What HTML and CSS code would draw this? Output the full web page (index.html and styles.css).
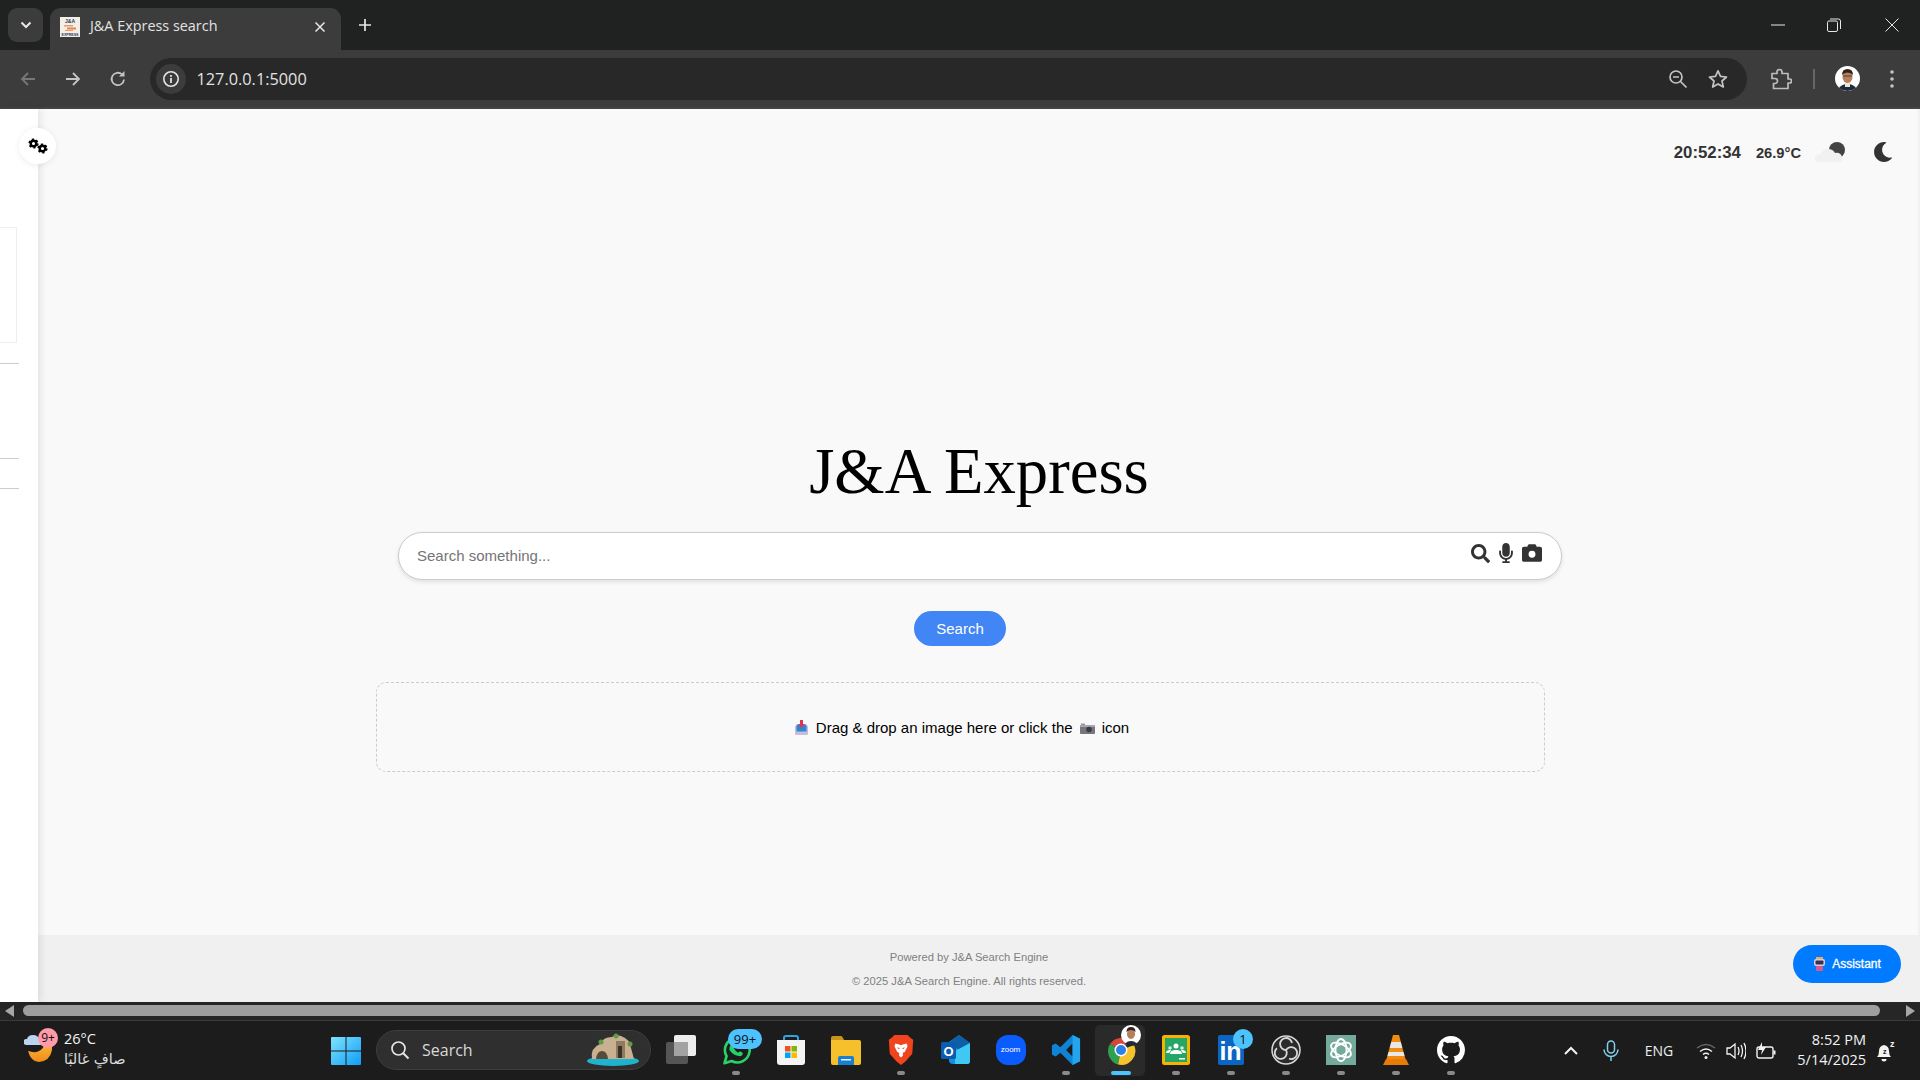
FILE: index.html
```html
<!DOCTYPE html>
<html lang="en">
<head>
    <meta charset="UTF-8">
    <title>J&amp;A Express search</title>
    <link rel="stylesheet" href="styles.css">
</head>
<body>
    <!-- browser chrome -->
    <div class="tabstrip">
        <div class="tab-search">
            <svg width="12" height="8" viewBox="0 0 12 8"><path d="M1.5 1.5 6 6l4.500-4.500" fill="none" stroke="#e8e8e8" stroke-width="2"/></svg>
        </div>
        <div class="tab">
            <svg class="favicon" width="20" height="20" viewBox="0 0 20 20">
                <rect width="20" height="20" fill="#f3eee6"/>
                <text x="10" y="6" font-size="5" font-weight="bold" text-anchor="middle" fill="#1f3a5f" font-family="Liberation Sans">J&amp;A</text>
                <rect x="4" y="8" width="9" height="1.5" fill="#e89a6a"/>
                <rect x="7" y="10.5" width="9" height="2" fill="#e8854f"/>
                <rect x="5" y="13" width="8" height="1" fill="#e89a6a"/>
                <text x="10" y="19" font-size="3.6" font-weight="bold" text-anchor="middle" fill="#1f3a5f" font-family="Liberation Sans">EXPRESS</text>
            </svg>
            <span class="tab-title">J&amp;A Express search</span>
            <svg class="tab-close" width="10" height="10" viewBox="0 0 10 10"><path d="M.5.5l9 9m0-9l-9 9" stroke="#e8e8e8" stroke-width="1.5"/></svg>
        </div>
        <svg class="new-tab" width="14" height="14" viewBox="0 0 14 14"><path d="M7 1v12M1 7h12" stroke="#e8e8e8" stroke-width="1.7"/></svg>
        <div class="win-controls">
            <svg width="14" height="14" viewBox="0 0 14 14" class="win-min"><path d="M0 7h14" stroke="#e8e8e8" stroke-width="1"/></svg>
            <svg width="14" height="14" viewBox="0 0 14 14" class="win-restore"><rect x=".5" y="3" width="10" height="10.5" rx="1.5" fill="none" stroke="#e8e8e8"/><path d="M3 1h8.500q2 0 2 2v8" fill="none" stroke="#e8e8e8"/></svg>
            <svg width="14" height="14" viewBox="0 0 14 14" class="win-close"><path d="M.5.5l13 13m0-13l-13 13" stroke="#e8e8e8" stroke-width="1"/></svg>
        </div>
    </div>

    <div class="toolbar">
        <div class="nav-btn">
            <svg width="18" height="18" viewBox="0 0 18 18"><path d="M16 9H3M9 3 3 9l6 6" fill="none" stroke="#777" stroke-width="1.8"/></svg>
        </div>
        <div class="nav-btn">
            <svg width="18" height="18" viewBox="0 0 18 18"><path d="M2 9h13M9 3l6 6-6 6" fill="none" stroke="#c4c4c4" stroke-width="1.8"/></svg>
        </div>
        <div class="nav-btn">
            <svg width="18" height="18" viewBox="-1 0 18 18"><path d="M15 9.500A6.200 6.200 0 1 1 13 4.400" fill="none" stroke="#c4c4c4" stroke-width="1.8"/><path d="M15.500 1v5.500H10z" fill="#c4c4c4"/></svg>
        </div>
        <div class="address">
            <div class="site-info">
                <svg width="18" height="18" viewBox="0 0 18 18"><circle cx="9" cy="9" r="7.200" fill="none" stroke="#e4e4e4" stroke-width="1.600"/><rect x="8.100" y="8" width="1.800" height="5" fill="#e4e4e4"/><rect x="8.100" y="5" width="1.800" height="1.800" fill="#e4e4e4"/></svg>
            </div>
            <span class="url">127.0.0.1:5000</span>
            <svg class="addr-zoom" width="20" height="20" viewBox="0 0 20 20"><circle cx="8" cy="8" r="6" fill="none" stroke="#c4c4c4" stroke-width="1.700"/><path d="M5 8h6M12.500 12.500 18.500 18.500" stroke="#c4c4c4" stroke-width="1.700"/></svg>
            <svg class="addr-star" width="20" height="20" viewBox="0 0 20 20"><path d="M10 1.800l2.500 5.600 6 .6-4.500 4 1.300 6-5.300-3.100-5.300 3.100 1.300-6-4.500-4 6-.6z" fill="none" stroke="#c4c4c4" stroke-width="1.700" stroke-linejoin="round"/></svg>
        </div>
        <div class="toolbar-end">
            <svg class="puzzle" width="22" height="22" viewBox="0 0 22 22"><path d="M2 5.500h5V4a2.500 2.500 0 0 1 5 0v1.500h6v5.500h1.500a2 2 0 0 1 0 4H18v5.500H3.500v-5h1.500a2.500 2.500 0 0 0 0-5H2z" fill="none" stroke="#bdbdbd" stroke-width="1.700" stroke-linejoin="round"/></svg>
            <span class="toolbar-sep"></span>
            <svg class="avatar" width="25" height="25" viewBox="0 0 25 25">
                <circle cx="12.500" cy="12.500" r="12.500" fill="#fff"/>
                <path d="M4 22q3-4 8.500-4T21 22q-4 3-8.500 3T4 22z" fill="#1f2a3c"/>
                <rect x="10" y="15" width="5" height="6" fill="#f0e4d4"/>
                <ellipse cx="12.500" cy="11" rx="5" ry="6" fill="#b77f5c"/>
                <path d="M7 9q0-6 5.500-6T18 9q-2-2.500-5.500-2.500T7 9z" fill="#33221a"/>
                <path d="M8 10h9" stroke="#444" stroke-width="1"/>
            </svg>
            <svg class="menu-dots" width="4" height="18" viewBox="0 0 4 18"><circle cx="2" cy="2" r="1.800" fill="#c4c4c4"/><circle cx="2" cy="9" r="1.800" fill="#c4c4c4"/><circle cx="2" cy="16" r="1.800" fill="#c4c4c4"/></svg>
        </div>
    </div>

    <!-- the page itself -->
    <div class="page">
        <aside class="sidebar">
            <div class="side-card"></div>
            <div class="side-line first"></div>
            <div class="side-line second"></div>
            <div class="side-line third"></div>
            <button class="gear-btn">
                <svg width="20" height="16" viewBox="0 0 20 16">
                    <circle cx="5.500" cy="5.500" r="2.800" fill="none" stroke="#000" stroke-width="2.400"/>
                    <circle cx="5.500" cy="5.500" r="4.200" fill="none" stroke="#000" stroke-width="1.800" stroke-dasharray="2.200 2.200"/>
                    <circle cx="14.500" cy="10.500" r="2.800" fill="none" stroke="#000" stroke-width="2.400"/>
                    <circle cx="14.500" cy="10.500" r="4.200" fill="none" stroke="#000" stroke-width="1.800" stroke-dasharray="2.200 2.200"/>
                </svg>
            </button>
        </aside>

        <main class="main">
            <div class="status">
                <span class="clock">20:52:34</span>
                <span class="temp">26.9°C</span>
                <svg class="weather" width="30" height="20" viewBox="0 0 30 20">
                    <circle cx="22" cy="8" r="8" fill="#444"/>
                    <path d="M3 20a3.500 3.500 0 0 1 0-7q1-1 3-1 2-5 7-5 5 0 7 4 6-1 7 4.500a2.800 2.800 0 0 1-1 4.500z" fill="#f1f1f1"/>
                </svg>
                <svg class="theme-moon" width="20" height="20" viewBox="0 0 512 512"><path fill="#333" d="M283.211 512c78.962 0 151.079-35.925 198.857-94.792 7.068-8.708-.639-21.43-11.562-19.35-124.203 23.654-238.262-71.576-238.262-196.954 0-72.222 38.662-138.635 101.498-174.394 9.686-5.512 7.25-20.197-3.756-22.23A258.156 258.156 0 0 0 283.211 0c-141.309 0-256 114.511-256 256 0 141.309 114.511 256 256 256z"/></svg>
            </div>

            <h1 class="brand">J&amp;A Express</h1>

            <div class="search-box">
                <span class="placeholder">Search something...</span>
                <svg class="icon-search" width="19" height="19" viewBox="0 0 512 512"><path fill="#333" d="M505 442.700L405.300 343c-4.500-4.500-10.600-7-17-7H372c27.600-35.300 44-79.700 44-128C416 93.100 322.900 0 208 0S0 93.100 0 208s93.100 208 208 208c48.300 0 92.700-16.400 128-44v16.300c0 6.400 2.500 12.500 7 17l99.700 99.700c9.400 9.400 24.600 9.400 33.900 0l28.300-28.300c9.400-9.400 9.400-24.600.1-34zM208 336c-70.700 0-128-57.200-128-128 0-70.700 57.200-128 128-128 70.700 0 128 57.200 128 128 0 70.700-57.200 128-128 128z"/></svg>
                <svg class="icon-mic" width="14" height="20" viewBox="0 0 352 512"><path fill="#333" d="M176 352c53.020 0 96-42.980 96-96V96c0-53.020-42.980-96-96-96S80 42.980 80 96v160c0 53.020 42.980 96 96 96zm160-160h-16c-8.840 0-16 7.160-16 16v48c0 74.800-64.490 134.820-140.790 127.380C96.710 376.890 48 317.110 48 250.300V208c0-8.840-7.160-16-16-16H16c-8.840 0-16 7.160-16 16v40.160c0 89.640 63.970 169.550 152 181.690V464H96c-8.840 0-16 7.160-16 16v16c0 8.840 7.160 16 16 16h160c8.840 0 16-7.160 16-16v-16c0-8.840-7.160-16-16-16h-56v-33.770C285.710 418.470 352 344.900 352 256v-48c0-8.840-7.160-16-16-16z"/></svg>
                <svg class="icon-camera" width="20" height="20" viewBox="0 0 512 512"><path fill="#333" d="M512 144v288c0 26.500-21.500 48-48 48H48c-26.500 0-48-21.500-48-48V144c0-26.500 21.500-48 48-48h88l12.300-32.900c7-18.700 24.900-31.100 44.900-31.100h125.500c20 0 37.900 12.400 44.900 31.100L376 96h88c26.500 0 48 21.500 48 48z"/><circle cx="256" cy="288" r="88" fill="#fff"/></svg>
            </div>

            <div class="lower">
                <button class="search-btn">Search</button>
                <div class="dropzone">
                    <svg class="emoji-inbox" width="13" height="15" viewBox="0 0 13 15">
                        <path d="M0 6h13v8a1 1 0 0 1-1 1H1a1 1 0 0 1-1-1z" fill="#c9bcd8"/>
                        <rect x="1.500" y="4.500" width="10" height="7" fill="#2f86d6"/>
                        <path d="M5 0h3v4h2L6.500 8 3 4h2z" fill="#e0364c"/>
                    </svg>
                    <span>Drag &amp; drop an image here or click the</span>
                    <svg class="emoji-camera" width="15" height="11" viewBox="0 0 15 11">
                        <rect y="2" width="15" height="9" rx="1" fill="#77757d"/>
                        <rect x="1" y="0.500" width="4" height="2" fill="#99979f"/>
                        <rect y="2" width="15" height="2" fill="#a8a6ae"/>
                        <circle cx="9" cy="6.500" r="2.800" fill="#3c3b42"/>
                    </svg>
                    <span>icon</span>
                </div>
            </div>

            <footer class="site-footer">
                <p>Powered by J&amp;A Search Engine</p>
                <p>© 2025 J&amp;A Search Engine. All rights reserved.</p>
            </footer>
        </main>

        <button class="assistant-btn">
            <svg width="13" height="14" viewBox="0 0 13 14">
                <rect x="3" y="0" width="7" height="2.500" fill="#e8b04a"/>
                <rect x="1" y="2" width="11" height="7" rx="2" fill="#d8c8e8"/>
                <rect x="2.500" y="3.500" width="8" height="4" rx="1" fill="#3a3350"/>
                <rect x="3" y="9" width="7" height="5" rx="1" fill="#d85a8a"/>
            </svg>
            Assistant
        </button>
    </div>

    <div class="scrollbar">
        <span class="arrow-left"></span>
        <span class="thumb"></span>
        <span class="arrow-right"></span>
    </div>

    <!-- windows taskbar -->
    <div class="taskbar">
        <div class="tb-weather">
            <div class="tb-weather-icon">
                <svg width="31" height="33" viewBox="0 0 31 33">
                    <defs><linearGradient id="moonFill" x1="0" y1="0" x2="0" y2="1"><stop offset="0" stop-color="#ffc93c"/><stop offset="1" stop-color="#f08a1c"/></linearGradient></defs>
                    <path d="M4 21q9 3 14-2 5-5 4-13 7 4 6 14-2 11-13 12Q7 32 4 21z" fill="url(#moonFill)"/>
                    <path d="M2 15a3 3 0 0 1 1-6q1-4 6-4t6 4h1a3 3 0 0 1 0 6z" fill="#bcd3f2"/>
                </svg>
                <span class="badge-pink">9+</span>
            </div>
            <div class="tb-weather-text">
                <div>26°C</div>
                <div class="tb-arabic" lang="ar" dir="rtl">صافٍ غالبًا</div>
            </div>
        </div>

        <div class="tb-start">
            <svg width="30" height="30" viewBox="0 0 30 30">
                <defs><linearGradient id="winFill" x1="0" y1="0" x2="1" y2="1"><stop offset="0" stop-color="#7fe3fb"/><stop offset="1" stop-color="#0f9dfa"/></linearGradient></defs>
                <path d="M1 1h13.500v13.500H0V2a1 1 0 0 1 1-1zM15.500 1H29a1 1 0 0 1 1 1v12.500H15.500zM0 15.500h14.500V29H1a1 1 0 0 1-1-1zM15.500 15.500H30V28a1 1 0 0 1-1 1H15.500z" fill="url(#winFill)"/>
            </svg>
        </div>

        <div class="tb-search">
            <svg width="20" height="20" viewBox="0 0 20 20"><circle cx="8.500" cy="8.500" r="6.500" fill="none" stroke="#e6e6e6" stroke-width="1.700"/><path d="M13 13l5.500 5.500" stroke="#e6e6e6" stroke-width="1.900"/></svg>
            <span>Search</span>
            <svg class="tb-island" width="54" height="36" viewBox="0 0 54 36">
                <ellipse cx="27" cy="29" rx="26" ry="5" fill="#1eb4cf"/>
                <path d="M6 27q-2-11 8-15 3-7 12-7 3-3 9-1 9 3 10 12l3 11z" fill="#c8b090"/>
                <path d="M30 9h9v17h-9z" fill="#8d7a63"/>
                <rect x="32" y="14" width="4" height="12" fill="#3b3026"/>
                <path d="M10 27q1-8 6-8t6 8z" fill="#5a4a39"/>
                <circle cx="15" cy="10" r="2.500" fill="#5f9a48"/>
                <circle cx="30" cy="4" r="2.500" fill="#5f9a48"/>
                <circle cx="44" cy="12" r="2.500" fill="#5f9a48"/>
            </svg>
        </div>

        <div class="tb-apps">
            <div class="app">
                <svg width="30" height="30" viewBox="0 0 30 30">
                    <rect x="0" y="7" width="22" height="22" rx="2" fill="#555"/>
                    <rect x="8" y="0" width="22" height="21" rx="2" fill="#ededed"/>
                    <rect x="8" y="7" width="14" height="14" fill="#a3a3a3"/>
                </svg>
                <span class="dot hidden"></span>
            </div>
            <div class="app">
                <svg width="30" height="34" viewBox="0 0 30 34" class="app-tall">
                    <path d="M2 32l2.300-8A14 14 0 1 1 10 29.500z" fill="none" stroke="#25d366" stroke-width="3" stroke-linejoin="round"/>
                    <path d="M10 11q2-3 3.500-1l1.500 3-1.500 2q2 3.500 5 5l2-1.500 3 1.500q1 2-2 4-8 0-13-7-1-3 2-6z" fill="#25d366" transform="translate(-1 0)"/>
                </svg>
                <span class="badge-blue wide">99+</span>
                <span class="dot"></span>
            </div>
            <div class="app">
                <svg width="30" height="30" viewBox="0 0 30 30">
                    <path d="M8 6V3q0-2 2-2h10q2 0 2 2v3" fill="none" stroke="#2aa6e0" stroke-width="2"/>
                    <path d="M1 5h28v22q0 3-3 3H4q-3 0-3-3z" fill="#f4f4f4"/>
                    <rect x="9" y="11" width="5.500" height="5.500" fill="#f25022"/>
                    <rect x="15.500" y="11" width="5.500" height="5.500" fill="#7fba00"/>
                    <rect x="9" y="17.500" width="5.500" height="5.500" fill="#00a4ef"/>
                    <rect x="15.500" y="17.500" width="5.500" height="5.500" fill="#ffb900"/>
                </svg>
                <span class="dot hidden"></span>
            </div>
            <div class="app">
                <svg width="30" height="30" viewBox="0 0 30 30">
                    <path d="M0 3q0-2 2-2h8q1 0 2 2l1 2H0z" fill="#c8951c"/>
                    <path d="M0 5h28q2 0 2 2v21q0 2-2 2H2q-2 0-2-2z" fill="#f5c02c"/>
                    <path d="M7 23q0-2 2-2h12q2 0 2 2v7H7z" fill="#1b7fd0"/>
                    <rect x="10" y="24" width="10" height="1.500" fill="#e8f2fb"/>
                </svg>
                <span class="dot hidden"></span>
            </div>
            <div class="app">
                <svg width="26" height="32" viewBox="0 0 26 32">
                    <path d="M6 0h14l3 3 3 2-1 15-7 8-5 4-5-4-7-8L0 5l3-2z" fill="#f0441f"/>
                    <path d="M7 9l4 1 2 1 2-1 4-1 1 3-3 6-2 1v3l-2 2-2-2v-3l-2-1-3-6z" fill="#fff"/>
                    <path d="M9 13l3 1-2 1zM17 13l-3 1 2 1z" fill="#f0441f"/>
                </svg>
                <span class="dot"></span>
            </div>
            <div class="app">
                <svg width="30" height="30" viewBox="0 0 30 30">
                    <path d="M8 7 18 0l11 8v18q0 3-3 3H12q-4 0-4-4z" fill="#1490df"/>
                    <path d="M18 0l11 8-11 7-10-7z" fill="#0f5fa8"/>
                    <path d="M14 16l15-8v18q0 3-3 3H14z" fill="#40c8f5"/>
                    <rect x="0" y="7" width="15" height="17" rx="1.500" fill="#0a5cb0"/>
                    <text x="7.500" y="20.500" font-size="13" font-weight="bold" text-anchor="middle" fill="#fff" font-family="Liberation Sans">O</text>
                </svg>
                <span class="dot hidden"></span>
            </div>
            <div class="app">
                <div class="zoom-logo">zoom</div>
                <span class="dot hidden"></span>
            </div>
            <div class="app">
                <svg width="30" height="32" viewBox="0 0 30 32">
                    <path fill-rule="evenodd" d="M22 0l8 4v24l-8 4L9 19l-5 4-4-2V11l4-2 5 4zM22 9l-7 7 7 7z" fill="#0f84d6"/>
                    <path fill-rule="evenodd" d="M22 0l8 4v24l-8 4zM22 9v14z" fill="#24a4ee"/>
                </svg>
                <span class="dot"></span>
            </div>
            <div class="app active">
                <svg width="30" height="30" viewBox="0 0 30 30">
                    <path d="M15 15 4 9A14 14 0 0 1 28 10H15z" fill="#d9463a"/>
                    <path d="M4 9a14 14 0 0 0 8 20.500L15 15z" fill="#2fa04f"/>
                    <path d="M28 10a14 14 0 0 1-16 19.500L15 15z" fill="#f5c32c"/>
                    <circle cx="15" cy="15" r="6.500" fill="#fff"/>
                    <circle cx="15" cy="15" r="5" fill="#2f7fe8"/>
                </svg>
                <svg class="chrome-profile" width="20" height="22" viewBox="0 0 20 22">
                    <circle cx="10" cy="10" r="10" fill="#fff"/>
                    <path d="M4 19q2-3 6-3t6 3q-3 2-6 2t-6-2z" fill="#222a38"/>
                    <ellipse cx="10" cy="9" rx="4" ry="5" fill="#b77f5c"/>
                    <path d="M5.500 7q0-5 4.500-5t4.500 5q-2-2-4.500-2T5.500 7z" fill="#33221a"/>
                </svg>
                <span class="dot running"></span>
            </div>
            <div class="app">
                <svg width="28" height="30" viewBox="0 0 28 30">
                    <rect x="1.500" y="1.500" width="25" height="27" rx="1" fill="#25a667" stroke="#f4b400" stroke-width="3"/>
                    <circle cx="14" cy="11" r="2.500" fill="#fff"/>
                    <circle cx="8" cy="13" r="1.800" fill="#cfeedd"/>
                    <circle cx="20" cy="13" r="1.800" fill="#cfeedd"/>
                    <path d="M8 19q0-4 6-4t6 4zM4 18q0-3 4-3 1 0 1 .5L7 18zM24 18q0-3-4-3-1 0-1 .5l2 2.500z" fill="#fff"/>
                    <rect x="17" y="23" width="6" height="1.500" fill="#fff"/>
                </svg>
                <span class="dot"></span>
            </div>
            <div class="app">
                <div class="linkedin-logo">in</div>
                <span class="badge-blue">1</span>
                <span class="dot"></span>
            </div>
            <div class="app">
                <svg width="30" height="30" viewBox="0 0 30 30">
                    <circle cx="15" cy="15" r="14" fill="#2b2b2b" stroke="#d8d8d8" stroke-width="1.500"/>
                    <g fill="none" stroke="#d8d8d8" stroke-width="1.800">
                        <path d="M15 15a6 6 0 1 1 6-7"/>
                        <path d="M15 15a6 6 0 1 1 6-7" transform="rotate(120 15 15)"/>
                        <path d="M15 15a6 6 0 1 1 6-7" transform="rotate(240 15 15)"/>
                    </g>
                </svg>
                <span class="dot"></span>
            </div>
            <div class="app">
                <svg width="30" height="30" viewBox="0 0 30 30">
                    <rect width="30" height="30" fill="#74aa9c"/>
                    <g fill="none" stroke="#fff" stroke-width="1.800">
                        <ellipse cx="15" cy="15" rx="5.500" ry="11"/>
                        <ellipse cx="15" cy="15" rx="5.500" ry="11" transform="rotate(60 15 15)"/>
                        <ellipse cx="15" cy="15" rx="5.500" ry="11" transform="rotate(120 15 15)"/>
                    </g>
                </svg>
                <span class="dot"></span>
            </div>
            <div class="app">
                <svg width="26" height="30" viewBox="0 0 26 30">
                    <path d="M10 0h6l7 26H3z" fill="#f28c0f"/>
                    <path d="M8.300 7h9.400l1.600 6H6.700zM5.500 17h15l1 4h-17z" fill="#e8e8e8"/>
                    <path d="M0 30l3-6h20l3 6z" fill="#e87a08"/>
                </svg>
                <span class="dot"></span>
            </div>
            <div class="app">
                <svg width="28" height="30" viewBox="0 0 16 16"><path fill="#fff" d="M8 0C3.580 0 0 3.580 0 8c0 3.540 2.290 6.530 5.470 7.590.4.070.55-.17.55-.38 0-.19-.01-.82-.01-1.490-2.010.37-2.530-.49-2.690-.94-.09-.23-.48-.94-.82-1.130-.28-.15-.68-.52-.01-.53.63-.01 1.080.58 1.230.82.720 1.210 1.870.87 2.330.66.070-.52.280-.87.510-1.070-1.780-.2-3.640-.89-3.640-3.950 0-.87.310-1.590.820-2.150-.08-.2-.36-1.020.08-2.120 0 0 .67-.21 2.200.82.640-.18 1.320-.27 2-.27.68 0 1.360.09 2 .27 1.530-1.040 2.200-.82 2.200-.82.44 1.100.16 1.920.08 2.120.51.56.82 1.270.82 2.150 0 3.070-1.870 3.750-3.650 3.950.29.25.54.73.54 1.480 0 1.070-.01 1.930-.01 2.200 0 .21.15.46.55.38A8.013 8.013 0 0016 8c0-4.420-3.580-8-8-8z"/></svg>
                <span class="dot"></span>
            </div>
        </div>

        <div class="tb-tray">
            <div class="tray-item w40"><svg width="14" height="9" viewBox="0 0 14 9"><path d="M1 8l6-6 6 6" fill="none" stroke="#f2f2f2" stroke-width="2"/></svg></div>
            <div class="tray-item w40"><svg width="16" height="22" viewBox="0 0 16 22"><rect x="4.500" y="1" width="7" height="12" rx="3.500" fill="none" stroke="#7fd0ea" stroke-width="1.500"/><path d="M1 9.500a7 7 0 0 0 14 0M8 16.500V21" fill="none" stroke="#7fd0ea" stroke-width="1.500"/></svg></div>
            <div class="tray-item w56 tray-lang">ENG</div>
            <div class="tray-item w30 tray-wifi"><svg width="20" height="16" viewBox="0 0 20 16"><path d="M1 5q9-7 18 0" fill="none" stroke="#666" stroke-width="1.500"/><path d="M4 8.500q6-5 12 0M7 11.500q3-2.500 6 0" fill="none" stroke="#f2f2f2" stroke-width="1.500"/><circle cx="10" cy="14.500" r="1.500" fill="#f2f2f2"/></svg></div>
            <div class="tray-item w30"><svg width="20" height="18" viewBox="0 0 20 18"><path d="M1 6h3l5-4v14l-5-4H1z" fill="none" stroke="#f2f2f2" stroke-width="1.300"/><path d="M12 5q2 4 0 8M15 3q3 6 0 12M18 1q4 8 0 16" fill="none" stroke="#f2f2f2" stroke-width="1.300"/></svg></div>
            <div class="tray-item w30"><svg width="20" height="18" viewBox="0 0 20 18"><rect x="1" y="5" width="16" height="11" rx="2" fill="none" stroke="#f2f2f2" stroke-width="1.400"/><rect x="17.500" y="8.500" width="2" height="4" fill="#f2f2f2"/><path d="M6 0 2 8h4l-1 5 5-8H6z" fill="#f2f2f2"/></svg></div>
            <div class="tray-clock">
                <div>8:52 PM</div>
                <div>5/14/2025</div>
            </div>
            <div class="tray-item w40"><svg width="20" height="24" viewBox="0 0 20 24"><path d="M1 18q2-2 2-6 0-5 5-6 5 1 5 6 0 4 2 6z" fill="#f2f2f2"/><path d="M5.500 20h5a2.500 2.500 0 0 1-5 0z" fill="#f2f2f2"/><text x="7" y="15" font-size="7" font-weight="bold" fill="#1c1c1c" font-family="Liberation Sans">z</text><text x="14" y="8" font-size="9" font-weight="bold" fill="#f2f2f2" font-family="Liberation Sans">z</text></svg></div>
        </div>
    </div>
</body>
</html>
```

FILE: styles.css
```css
* {
    box-sizing: border-box;
}

html, body {
    margin: 0;
    height: 1080px;
    overflow: hidden;
}

body {
    display: flex;
    flex-direction: column;
    font-family: 'Liberation Sans', Arial, sans-serif;
    background: #1c1c1c;
}

/* tab strip */
.tabstrip {
    height: 50px;
    background: #202222;
    display: flex;
    align-items: flex-start;
    flex-shrink: 0;
    position: relative;
}

.tab-search {
    width: 35px;
    height: 34px;
    margin: 8px 0 0 8px;
    background: #3c3c3c;
    border-radius: 9px;
    display: flex;
    align-items: center;
    justify-content: center;
}

.tab {
    width: 291px;
    height: 42px;
    margin: 8px 0 0 7px;
    background: #3c3c3c;
    border-radius: 11px 11px 0 0;
    display: flex;
    align-items: center;
    padding: 0 16px 8px 10px;
}

.favicon {
    flex-shrink: 0;
    margin-top: 3px;
}

.tab-title {
    margin-left: 10px;
    flex: 1;
    color: #e3e3e3;
    font: 14.4px 'Open Sans', sans-serif;
}

.tab-close {
    margin-top: 3px;
}

.new-tab {
    margin: 18px 0 0 17px;
}

.win-controls {
    margin-left: auto;
    display: flex;
    margin-top: 18px;
}

.win-min { margin-right: 42px; }
.win-restore { margin-right: 44px; }
.win-close { margin-right: 21px; }

/* toolbar */
.toolbar {
    height: 59px;
    flex-shrink: 0;
    background: #3c3c3c;
    border-bottom: 2px solid #444;
    display: flex;
    align-items: center;
    padding: 0 0 0 6px;
}

.nav-btn {
    width: 44px;
    height: 44px;
    margin-right: 0.5px;
    display: flex;
    align-items: center;
    justify-content: center;
}

.address {
    width: 1597px;
    height: 42px;
    margin-left: 10px;
    background: #282828;
    border-radius: 21px;
    display: flex;
    align-items: center;
    padding: 0 19px 0 6px;
}

.site-info {
    width: 30px;
    height: 30px;
    border-radius: 50%;
    background: #3c3c3c;
    display: flex;
    align-items: center;
    justify-content: center;
}

.url {
    margin-left: 11px;
    flex: 1;
    color: #e3e3e3;
    font: 16.3px 'Open Sans', sans-serif;
}

.addr-star { margin-left: 20px; }

.toolbar-end {
    display: flex;
    align-items: center;
    margin-left: 23px;
}

.toolbar-sep {
    width: 2px;
    height: 20px;
    background: #666;
    margin: 0 20px 0 21px;
}

.menu-dots { margin-left: 30px; }

/* page */
.page {
    height: 893px;
    flex-shrink: 0;
    display: flex;
    position: relative;
    background: #f9f9f9;
}

.sidebar {
    width: 38px;
    flex-shrink: 0;
    background: #fff;
    box-shadow: 2px 0 8px rgba(0, 0, 0, 0.1);
    position: relative;
    z-index: 2;
    padding-top: 118px;
}

.side-card {
    width: 17px;
    height: 116px;
    border: 1px solid #eee;
    border-left: none;
}

.side-line {
    width: 19px;
    height: 1px;
    background: #ccc;
}

.side-line.first { margin-top: 20px; }
.side-line.second { margin-top: 94px; }
.side-line.third { margin-top: 29px; }

.gear-btn {
    position: absolute;
    left: 19px;
    top: 19px;
    width: 37px;
    height: 36px;
    border: none;
    border-radius: 50%;
    background: #fff;
    box-shadow: 0 1px 6px rgba(0, 0, 0, 0.08);
    padding: 0;
    display: flex;
    align-items: center;
    justify-content: center;
}

.main {
    flex: 1;
    min-width: 0;
    display: flex;
    flex-direction: column;
    box-shadow: inset -3px 0 3px -2px rgba(0, 0, 0, 0.06);
}

.status {
    height: 88px;
    padding: 33px 27px 0 0;
    display: flex;
    align-items: flex-start;
    justify-content: flex-end;
    color: #333;
    font-weight: bold;
}

.clock {
    font-size: 16.8px;
    line-height: 22px;
}

.temp {
    font-size: 14.7px;
    line-height: 22px;
    margin-left: 15px;
}

.weather {
    margin-left: 14px;
}

.theme-moon {
    margin-left: 28px;
}

.brand {
    margin: 236px 0 23px;
    text-align: center;
    font: normal 64.7px/76px 'Liberation Serif', 'Times New Roman', serif;
    color: #000;
}

.search-box {
    width: 1164px;
    height: 48px;
    margin: 0 0 0 360px;
    background: #fff;
    border: 1px solid #ccc;
    border-radius: 24px;
    box-shadow: 0 2px 4px rgba(0, 0, 0, 0.1);
    display: flex;
    align-items: center;
    padding: 0 19px 6px 18px;
}

.placeholder {
    flex: 1;
    color: #757575;
    font-size: 15px;
    padding-top: 4px;
}

.icon-mic { margin-left: 9px; }
.icon-camera { margin-left: 9px; }

.lower {
    margin-right: 38px;
    display: flex;
    flex-direction: column;
    align-items: center;
}

.search-btn {
    width: 92px;
    height: 35px;
    margin-top: 31px;
    border: none;
    border-radius: 18px;
    background: #4285f4;
    color: #fff;
    font: 15px 'Liberation Sans', Arial, sans-serif;
}

.dropzone {
    width: 1169px;
    height: 90px;
    margin-top: 36px;
    padding-left: 4px;
    border: 1px dashed #ccc;
    border-radius: 10px;
    display: flex;
    align-items: center;
    justify-content: center;
    color: #000;
    font-size: 15px;
}

.emoji-inbox { margin-right: 8px; }
.emoji-camera { margin: 2px 7px 0 7px; }

.site-footer {
    margin-top: auto;
    height: 67px;
    background: #f0f0f0;
    padding: 10px 20px 0 0;
    text-align: center;
    color: #808080;
    font-size: 11.2px;
    line-height: 24px;
}

.site-footer p {
    margin: 0;
}

.assistant-btn {
    position: absolute;
    right: 19px;
    bottom: 19px;
    width: 108px;
    height: 38px;
    border: none;
    border-radius: 19px;
    background: #007bff;
    color: #fff;
    font: 12px 'Liberation Sans', Arial, sans-serif;
    -webkit-text-stroke: 0.3px #fff;
    display: flex;
    align-items: center;
    justify-content: center;
    gap: 6px;
    z-index: 3;
}

/* window scrollbar */
.scrollbar {
    height: 19px;
    flex-shrink: 0;
    background: #262626;
    border-bottom: 1px solid #3a3a3a;
    display: flex;
    align-items: center;
    padding: 0 5px 1px 5px;
}

.thumb {
    height: 11px;
    flex: 1;
    margin: 0 26px 0 9px;
    background: #9f9f9f;
    border-radius: 6px;
}

.arrow-left, .arrow-right {
    width: 0;
    height: 0;
    border-top: 6px solid transparent;
    border-bottom: 6px solid transparent;
}

.arrow-left { border-right: 9px solid #a8a8a8; }
.arrow-right { border-left: 9px solid #a8a8a8; }

/* taskbar */
.taskbar {
    height: 59px;
    flex-shrink: 0;
    background: #1c1c1c;
    display: flex;
    color: #f2f2f2;
    font-family: 'Open Sans', sans-serif;
}

.tb-weather {
    width: 318px;
    padding: 8px 0 0 24px;
    display: flex;
    position: relative;
}

.tb-weather-icon {
    width: 40px;
    padding-top: 1px;
    position: relative;
}

.badge-pink {
    position: absolute;
    left: 14px;
    top: -1px;
    width: 20px;
    height: 20px;
    border-radius: 50%;
    background: #ff9aa8;
    color: #111;
    font-size: 12px;
    line-height: 20px;
    text-align: center;
}

.tb-weather-text {
    font-size: 14.5px;
    line-height: 20px;
}

.tb-arabic {
    font: 14.5px/20px 'DejaVu Sans', sans-serif;
    color: #ddd;
    text-align: left;
    white-space: nowrap;
}

.tb-start {
    width: 55px;
    display: flex;
    align-items: center;
    justify-content: center;
}

.tb-search {
    width: 275px;
    height: 40px;
    margin: 9px 0 0 3px;
    background: #2f2f2f;
    border: 1px solid #3d3d3d;
    border-radius: 20px;
    display: flex;
    align-items: center;
    padding: 0 10px 0 13px;
    font-size: 16px;
    color: #d8d8d8;
}

.tb-search span {
    margin-left: 12px;
    flex: 1;
}

.tb-apps {
    display: flex;
    margin-left: 2px;
}

.app {
    width: 55px;
    height: 59px;
    position: relative;
    display: flex;
    flex-direction: column;
    align-items: center;
    padding-top: 14px;
}

.app > svg:first-child {
    height: 30px;
}

.app.active::before {
    content: "";
    position: absolute;
    left: 2px;
    right: 3px;
    top: 4px;
    bottom: 4px;
    background: #2a2a2a;
    border-radius: 5px;
}

.app.active > svg {
    position: relative;
}

.dot {
    width: 8px;
    height: 4px;
    margin-top: 6px;
    border-radius: 2px;
    background: #8a8a8a;
    position: relative;
}

.dot.hidden {
    visibility: hidden;
}

.dot.running {
    width: 20px;
    background: #4cc2ff;
}

.badge-blue {
    position: absolute;
    left: 30px;
    top: 8px;
    width: 20px;
    height: 20px;
    border-radius: 50%;
    background: #4cc2ff;
    color: #111;
    font-size: 13px;
    line-height: 20px;
    text-align: center;
}

.badge-blue.wide {
    left: 20px;
    width: 34px;
    border-radius: 10px;
}

.zoom-logo {
    width: 30px;
    height: 30px;
    border-radius: 12px;
    background: #0b5cff;
    color: #fff;
    font: 8px/30px 'Liberation Sans', Arial, sans-serif;
    text-align: center;
}

.linkedin-logo {
    width: 26px;
    height: 30px;
    border-radius: 2px;
    background: #0a66c2;
    color: #fff;
    font: bold 25px/32px 'Liberation Sans', Arial, sans-serif;
    text-align: center;
}

.chrome-profile {
    position: absolute !important;
    left: 28px;
    top: 4px;
}

.tb-tray {
    margin-left: auto;
    margin-right: 14px;
    display: flex;
    align-items: center;
}

.tray-item {
    display: flex;
    align-items: center;
    justify-content: center;
}

.w40 { width: 40px; }
.w56 { width: 56px; }
.w30 { width: 30px; }

.tray-lang {
    font-size: 14px;
    color: #eee;
}

.tray-wifi {
    margin-left: 4px;
}

.tray-clock {
    width: 85px;
    text-align: right;
    font-size: 14.5px;
    line-height: 20px;
    margin-top: -2px;
}
```
